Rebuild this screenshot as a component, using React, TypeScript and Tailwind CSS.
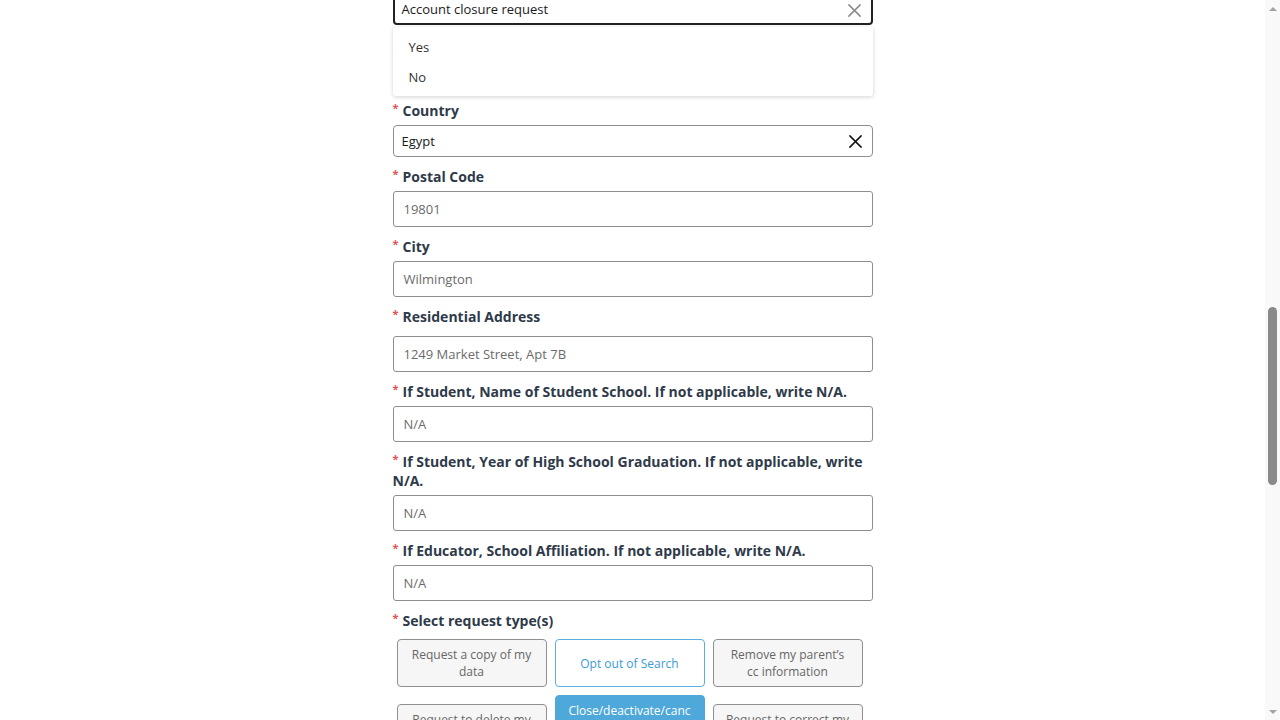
import React from 'react';

const font = { fontFamily: '"Open Sans", "Noto Sans", sans-serif' };

const XIcon: React.FC<{ className?: string }> = ({ className }) => (
  <svg viewBox="0 0 16 16" className={className} fill="none" stroke="currentColor" strokeWidth={1.6} strokeLinecap="round">
    <path d="M2 2 L14 14 M14 2 L2 14" />
  </svg>
);

const Label: React.FC<{ text: string; mb?: string }> = ({ text, mb = 'mb-[5px]' }) => (
  <div className={`text-[14px] leading-[19px] font-bold text-[#2f3a4a] ${mb}`}>
    <span className="text-[#e05252] text-[11px] align-top relative -top-[3px] mr-[4px]">*</span>
    {text}
  </div>
);

const Field: React.FC<{ label: string; value: string; gap?: string }> = ({ label, value, gap }) => (
  <div className="mt-[10px]">
    <div className={gap}>
      <Label text={label} />
    </div>
    <div className="h-[36px] border border-[#8e8e8e] rounded-[3px] flex items-center px-[10px] pt-px text-[13px] text-[#6b6b6b]">
      {value}
    </div>
  </div>
);

const requestTypes = [
  { text: 'Request a copy of my data', state: 'idle' },
  { text: 'Opt out of Search', state: 'hover' },
  { text: 'Remove my parent\u2019s cc information', state: 'idle' },
  { text: 'Request to delete my personal data', state: 'idle' },
  { text: 'Close/deactivate/cancel my College Board account', state: 'active' },
  { text: 'Request to correct my personal data', state: 'idle' },
];

export default function App() {
  return (
    <div className="h-screen w-full overflow-hidden flex bg-white" style={font}>
      <div className="flex-1 overflow-hidden">
        <div className="w-[480px] mx-auto -mt-[7px]">
          {/* open select */}
          <div className="h-[32px] border-2 border-[#222] rounded-[4px] flex items-center justify-between pl-[7px] pr-[9px] pt-[2px] text-[13px] text-[#1a1a1a]">
            <span>Account closure request</span>
            <XIcon className="w-[15px] h-[15px] text-[#8a8a8a]" />
          </div>
          <div className="mt-[2px] bg-white rounded-[3px] shadow-[0_1px_4px_rgba(0,0,0,0.18)] pt-[6px] pb-[3px] text-[13px] text-[#333]">
            <div className="h-[30px] flex items-center px-[16px]">Yes</div>
            <div className="h-[30px] flex items-center px-[16px]">No</div>
          </div>

          <div className="mt-[5px]">
            <Label text="Country" />
            <div className="h-[32px] border border-[#8e8e8e] rounded-[4px] flex items-center justify-between pl-[8px] pr-[9px] text-[13px] text-[#1a1a1a]">
              <span className="pt-[2px]">Egypt</span>
              <XIcon className="w-[15px] h-[15px] text-[#111]" />
            </div>
          </div>

          <Field label="Postal Code" value="19801" />
          <Field label="City" value="Wilmington" />
          <Field label="Residential Address" value="1249 Market Street, Apt 7B" gap="pb-[5px]" />
          <Field label="If Student, Name of Student School. If not applicable, write N/A." value="N/A" />
          <Field label="If Student, Year of High School Graduation. If not applicable, write N/A." value="N/A" />
          <Field label="If Educator, School Affiliation. If not applicable, write N/A." value="N/A" />

          <div className="mt-[10px]">
            <Label text="Select request type(s)" mb="mb-[9px]" />
            <div className="ml-[4px] w-[466px] grid grid-cols-3 gap-[8px] items-center">
              {requestTypes.map((t) => (
                <div
                  key={t.text}
                  className={`min-h-[48px] rounded-[4px] border px-[10px] py-[6px] flex items-center justify-center text-center text-[12px] leading-[17px] ${
                    t.state === 'active'
                      ? 'bg-[#4ea8da] border-[#4ea8da] text-white'
                      : t.state === 'hover'
                      ? 'bg-white border-[#5aaee0] text-[#3a9bd5]'
                      : 'bg-[#f6f6f6] border-[#8f8f8f] text-[#666]'
                  }`}
                  style={{ overflowWrap: 'anywhere' }}
                >
                  {t.text}
                </div>
              ))}
            </div>
          </div>
          <div className="h-[200px]" />
        </div>
      </div>

      {/* scrollbar */}
      <div className="w-[15px] h-full bg-[#f9f9f9] flex flex-col items-center">
        <div className="h-[17px] flex items-center justify-center">
          <div className="w-0 h-0 border-l-[4px] border-r-[4px] border-b-[4px] border-l-transparent border-r-transparent border-b-[#a3a3a3]" />
        </div>
        <div className="flex-1 w-full flex flex-col items-center">
          <div className="h-[290px]" />
          <div className="w-[9px] h-[178px] rounded-full bg-[#8a8a8a]" />
        </div>
        <div className="h-[17px] flex items-center justify-center">
          <div className="w-0 h-0 border-l-[4px] border-r-[4px] border-t-[4px] border-l-transparent border-r-transparent border-t-[#a3a3a3]" />
        </div>
      </div>
    </div>
  );
}
